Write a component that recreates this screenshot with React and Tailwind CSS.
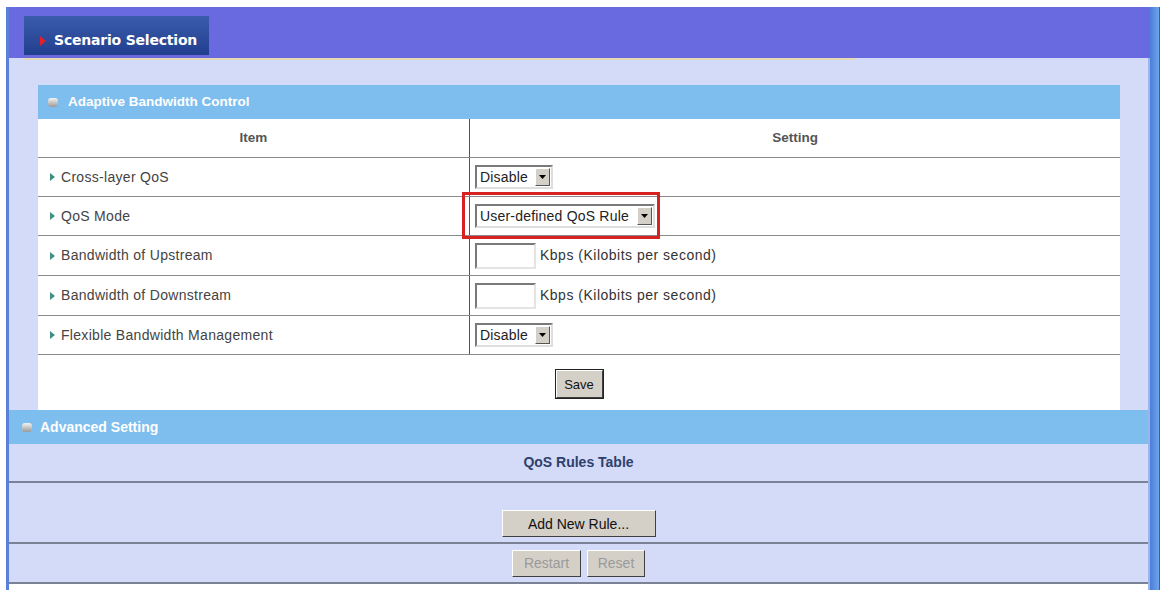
import { ChevronDown } from "lucide-react";

const rows = [
  { label: "Cross-layer QoS", kind: "select", value: "Disable", width: "w-[78px]" },
  { label: "QoS Mode", kind: "select", value: "User-defined QoS Rule", width: "w-[180px]", marked: true },
  { label: "Bandwidth of Upstream", kind: "kbps" },
  { label: "Bandwidth of Downstream", kind: "kbps" },
  { label: "Flexible Bandwidth Management", kind: "select", value: "Disable", width: "w-[78px]" },
];

const rowHeights = ["h-[39px]", "h-[39px]", "h-[40px]", "h-[40px]", "h-[39px]"];

const Ball = () => (
  <span className="inline-block w-[10px] h-[9px] rounded-[3px] bg-gradient-to-b from-[#f4f4f4] to-[#9a9a9a]" />
);

const Select = ({ value, width }) => (
  <div
    className={`${width} h-[24px] flex items-center justify-between bg-white border-2 border-t-[#7a7a7a] border-l-[#7a7a7a] border-b-[#dedede] border-r-[#dedede]`}
  >
    <span className="pl-[3px] text-[14px] text-[#222] leading-none tracking-[0.2px]">{value}</span>
    <span className="w-[15px] h-[18px] mr-[1px] flex items-center justify-center bg-[#d4d0c8] border border-t-white border-l-white border-b-[#555] border-r-[#555]">
      <svg width="7" height="4" viewBox="0 0 7 4">
        <path d="M0 0h7L3.5 4z" fill="#000" />
      </svg>
    </span>
  </div>
);

const Kbps = () => (
  <div className="flex items-center gap-[4px]">
    <div className="w-[61px] h-[26px] bg-white border-2 border-t-[#7a7a7a] border-l-[#7a7a7a] border-b-[#e4e4e4] border-r-[#e4e4e4]" />
    <span className="text-[14px] text-[#333] tracking-[0.5px]">Kbps (Kilobits per second)</span>
  </div>
);

const btn =
  "bg-[#d4d0c8] border border-t-white border-l-white border-b-[#404040] border-r-[#404040] text-[13px] leading-none";

export default function App() {
  return (
    <div className="w-[1162px] h-[590px] bg-white pt-[7px] pl-[6px] font-['Liberation_Sans',Arial,sans-serif] overflow-hidden">
      <div className="flex w-[1154px] h-[583px]">
        <div className="w-[3px] bg-[#5b80d8]" />

        <div className="w-[1141px] flex flex-col">
          {/* top band */}
          <div className="h-[51px] bg-[#6a6ae0] pl-[15px] pt-[9px]">
            <div className="w-[185px] h-[39px] bg-gradient-to-b from-[#3a5cab] to-[#223f8f] flex items-center pl-[16px] pt-[10px]">
              <svg width="6" height="10" viewBox="0 0 6 10" className="mr-[8px]">
                <path d="M0 0l6 5-6 5z" fill="#e0202a" />
              </svg>
              <span className="font-['DejaVu_Sans',Verdana,sans-serif] font-bold text-[14px] text-white tracking-[-0.2px]">
                Scenario Selection
              </span>
            </div>
          </div>

          <div className="flex-1 bg-[#d3dbf8] border-r-2 border-[#9fb4ea] flex flex-col">
            <div className="h-[2px] ml-[15px] w-[831px] bg-[#e4dab6]" />

            {/* Adaptive Bandwidth Control */}
            <div className="mt-[25px] ml-[29px] w-[1082px]">
              <div className="h-[34px] bg-[#7ebeee] flex items-center pl-[10px] gap-[10px]">
                <Ball />
                <span className="text-white font-bold text-[13.5px]">Adaptive Bandwidth Control</span>
              </div>

              <div className="bg-white">
                <div className="flex h-[39px] border-b border-[#8a8a8a] text-[13.5px] font-bold text-[#555]">
                  <div className="w-[432px] border-r border-[#555] flex items-center justify-center">Item</div>
                  <div className="flex-1 flex items-center justify-center">Setting</div>
                </div>

                {rows.map((r, i) => (
                  <div key={r.label} className={`flex ${rowHeights[i]} border-b border-[#8a8a8a]`}>
                    <div className="w-[432px] border-r border-[#555] flex items-center pl-[12px] gap-[6px]">
                      <svg width="5" height="8" viewBox="0 0 5 8">
                        <path d="M0 0l5 4-5 4z" fill="#3f8f83" />
                      </svg>
                      <span className="text-[14px] text-[#444] tracking-[0.3px]">{r.label}</span>
                    </div>
                    <div className="flex-1 flex items-center pl-[5px] relative">
                      {r.kind === "select" ? <Select value={r.value} width={r.width} /> : <Kbps />}
                      {r.marked && (
                        <div className="absolute left-[-8px] top-[-5px] w-[198px] h-[47px] border-[3px] border-[#d82222]" />
                      )}
                    </div>
                  </div>
                ))}

                <div className="h-[55px] flex items-center justify-center pt-[3px]">
                  <button className={`${btn} w-[47px] h-[28px] outline outline-1 outline-[#222] text-[#111]`}>Save</button>
                </div>
              </div>
            </div>

            {/* Advanced Setting */}
            <div className="h-[34px] bg-[#7ebeee] flex items-center pl-[13px] gap-[8px]">
              <Ball />
              <span className="text-white font-bold text-[14px]">Advanced Setting</span>
            </div>
            <div className="h-[39px] border-b-2 border-[#7c8296] flex items-center justify-center">
              <span className="text-[14px] font-bold text-[#2e3f6c]">QoS Rules Table</span>
            </div>
            <div className="h-[61px] border-b-2 border-[#7c8296] flex items-end justify-center pb-[5px]">
              <button className={`${btn} w-[154px] h-[27px] text-[#111] text-[14px]`}>Add New Rule...</button>
            </div>
            <div className="h-[40px] border-b-2 border-[#7c8296] flex items-center justify-center gap-[6px]">
              <button className={`${btn} w-[69px] h-[27px] text-[#9a9a9a] text-[14px]`}>Restart</button>
              <button className={`${btn} w-[58px] h-[27px] text-[#9a9a9a] text-[14px]`}>Reset</button>
            </div>
            <div className="flex-1 bg-white" />
          </div>
        </div>

        <div className="w-[10px] bg-gradient-to-r from-[#4a7fd8] to-[#6ea4ec] border-r border-[#3a5cb2]" />
      </div>
    </div>
  );
}
